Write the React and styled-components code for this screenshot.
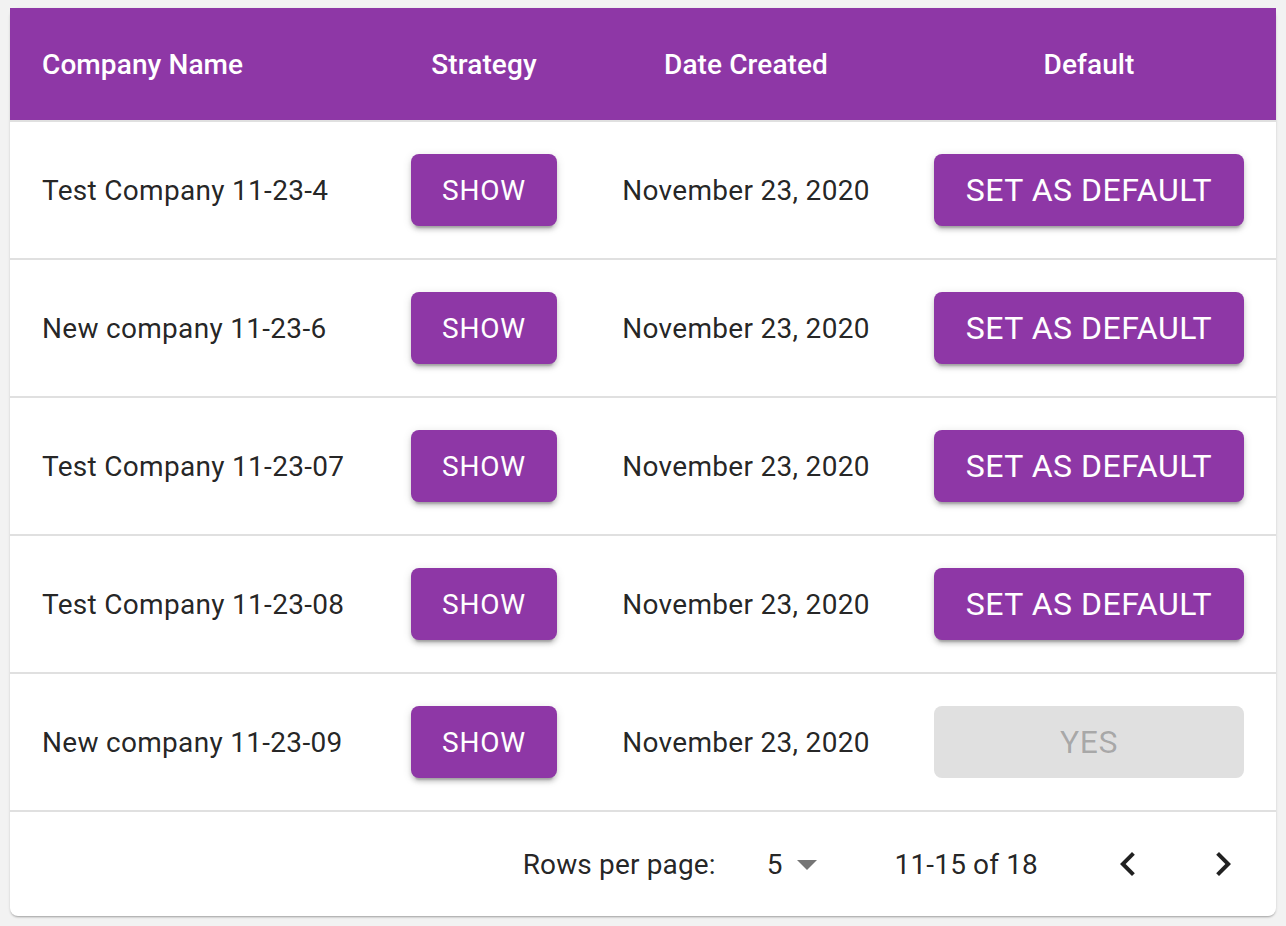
import React from "react";
import styled, { createGlobalStyle } from "styled-components";

const purple = "#8e37a6";

const rows = [
  { name: "Test Company 11-23-4", date: "November 23, 2020", isDefault: false },
  { name: "New company 11-23-6", date: "November 23, 2020", isDefault: false },
  { name: "Test Company 11-23-07", date: "November 23, 2020", isDefault: false },
  { name: "Test Company 11-23-08", date: "November 23, 2020", isDefault: false },
  { name: "New company 11-23-09", date: "November 23, 2020", isDefault: true },
];

export default function App() {
  return (
    <>
      <GlobalStyle />
      <Page>
        <Paper>
          <HeadRow>
            <HeadCell>Company Name</HeadCell>
            <HeadCell center>Strategy</HeadCell>
            <HeadCell center>Date Created</HeadCell>
            <HeadCell center>Default</HeadCell>
          </HeadRow>
          {rows.map(({ name, date, isDefault }) => (
            <Row key={name}>
              <Cell>{name}</Cell>
              <Cell center>
                <Button>Show</Button>
              </Cell>
              <Cell center>{date}</Cell>
              <Cell center>
                {isDefault ? (
                  <Button wide disabled>
                    Yes
                  </Button>
                ) : (
                  <Button wide>Set as default</Button>
                )}
              </Cell>
            </Row>
          ))}
          <Footer>
            <span>Rows per page:</span>
            <Select>
              <span>5</span>
              <svg width="48" height="48" viewBox="0 0 24 24">
                <path d="M7 10l5 5 5-5z" fill="rgba(0,0,0,0.54)" />
              </svg>
            </Select>
            <Range>11-15 of 18</Range>
            <IconButton>
              <svg width="48" height="48" viewBox="0 0 24 24">
                <path
                  d="M15.41 16.59L10.83 12l4.58-4.59L14 6l-6 6 6 6 1.41-1.41z"
                  fill="rgba(0,0,0,0.87)"
                />
              </svg>
            </IconButton>
            <IconButton>
              <svg width="48" height="48" viewBox="0 0 24 24">
                <path
                  d="M8.59 16.59L13.17 12 8.59 7.41 10 6l6 6-6 6-1.41-1.41z"
                  fill="rgba(0,0,0,0.87)"
                />
              </svg>
            </IconButton>
          </Footer>
        </Paper>
      </Page>
    </>
  );
}

const GlobalStyle = createGlobalStyle`
  html, body {
    margin: 0;
    padding: 0;
    background: #f2f2f2;
    font-family: Roboto, "Liberation Sans", sans-serif;
  }
`;

const Page = styled.div`
  padding: 8px 10px 10px 10px;
`;

const Paper = styled.div`
  background: #fff;
  border-radius: 8px;
  box-shadow: 0 2px 2px -1px rgba(0, 0, 0, 0.25), 0 1px 3px rgba(0, 0, 0, 0.12);
`;

const columns = "368px 212px 312px 374px";

const HeadRow = styled.div`
  display: grid;
  grid-template-columns: ${columns};
  height: 112px;
  background: ${purple};
  border-bottom: 2px solid #e0e0e0;
`;

const HeadCell = styled.div`
  display: flex;
  align-items: center;
  justify-content: ${({ center }) => (center ? "center" : "flex-start")};
  padding: 0 32px;
  color: #fff;
  font-size: 28px;
  font-weight: 500;
  letter-spacing: 0.1px;
`;

const Row = styled.div`
  display: grid;
  grid-template-columns: ${columns};
  height: 136px;
  border-bottom: 2px solid #e0e0e0;
`;

const Cell = styled.div`
  display: flex;
  align-items: center;
  justify-content: ${({ center }) => (center ? "center" : "flex-start")};
  padding: 0 32px;
  color: rgba(0, 0, 0, 0.87);
  font-size: 28px;
  letter-spacing: 0.3px;
  white-space: nowrap;
`;

const Button = styled.button`
  display: flex;
  align-items: center;
  justify-content: center;
  width: ${({ wide }) => (wide ? "310px" : "146px")};
  height: 72px;
  border: none;
  border-radius: 8px;
  font-family: Roboto, "Liberation Sans", sans-serif;
  font-size: ${({ wide }) => (wide ? "32px" : "28px")};
  font-weight: 400;
  letter-spacing: ${({ wide }) => (wide ? "0.5px" : "0.8px")};
  text-transform: uppercase;
  color: #fff;
  background: ${purple};
  box-shadow: 0 6px 2px -4px rgba(0, 0, 0, 0.2), 0 4px 4px 0 rgba(0, 0, 0, 0.14),
    0 2px 10px 0 rgba(0, 0, 0, 0.12);

  &:disabled {
    color: rgba(0, 0, 0, 0.26);
    background: #e0e0e0;
    box-shadow: none;
  }
`;

const Footer = styled.div`
  display: flex;
  align-items: center;
  justify-content: flex-end;
  height: 104px;
  padding-right: 29px;
  font-size: 28px;
  letter-spacing: 0.15px;
  color: rgba(0, 0, 0, 0.87);
`;

const Select = styled.div`
  display: flex;
  align-items: center;
  margin-left: 51px;
`;

const Range = styled.span`
  margin-left: 64px;
  margin-right: 66px;
`;

const IconButton = styled.div`
  display: flex;
  width: 48px;
  height: 48px;
  & + & {
    margin-left: 47px;
  }
`;
